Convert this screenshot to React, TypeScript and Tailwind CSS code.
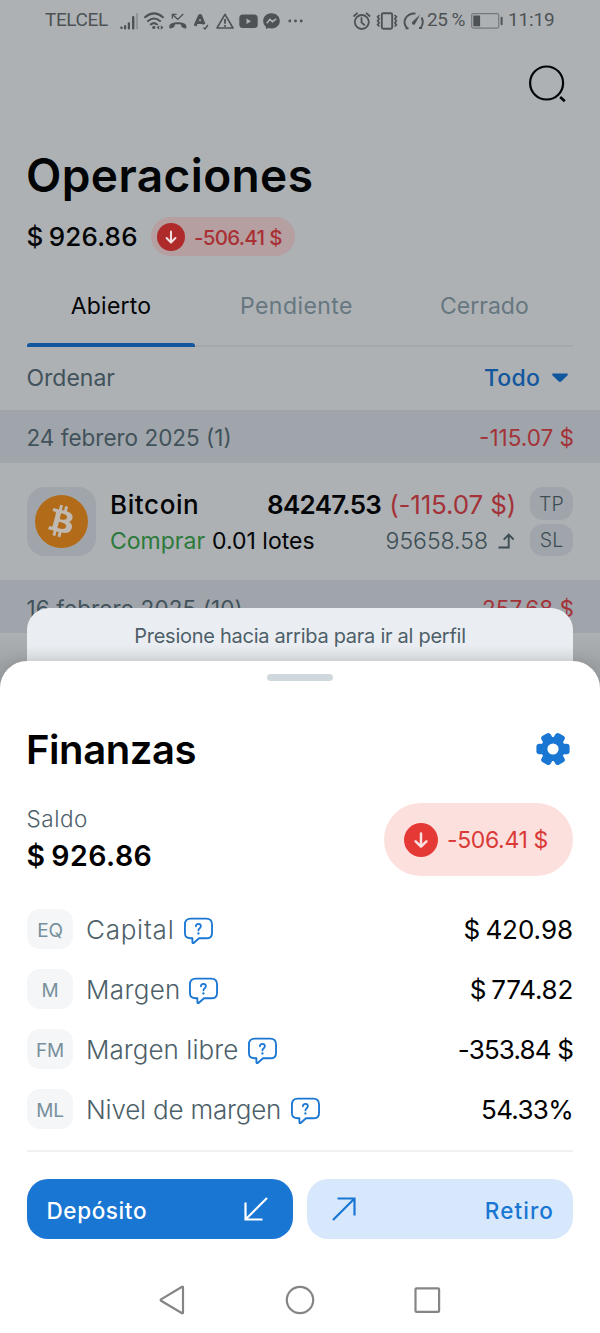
import React from "react";
import { FaBitcoin } from "react-icons/fa";

type Metric = {
  code: string;
  label: string;
  labelClass: string;
  value: string;
  valueClass: string;
};

const metrics: Metric[] = [
  {
    code: "EQ",
    label: "Capital",
    labelClass: "w-[97px] tracking-[0.75px]",
    value: "$ 420.98",
    valueClass: "tracking-[-0.05px] [word-spacing:-2px]",
  },
  {
    code: "M",
    label: "Margen",
    labelClass: "w-[102px] tracking-[0.35px]",
    value: "$ 774.82",
    valueClass: "tracking-[-0.25px] [word-spacing:-2px]",
  },
  {
    code: "FM",
    label: "Margen libre",
    labelClass: "w-[161px] tracking-[0.05px]",
    value: "-353.84 $",
    valueClass: "tracking-[-0.85px]",
  },
  {
    code: "ML",
    label: "Nivel de margen",
    labelClass: "w-[204px] tracking-[-0.2px]",
    value: "54.33%",
    valueClass: "tracking-[-0.7px]",
  },
];

const StatusBar = () => (
  <div className="flex h-[40px] items-center pt-px pl-[45px] font-['Roboto',sans-serif] text-[19px] text-[#4e5254]">
    <span className="w-[75px] tracking-[-0.4px]">TELCEL</span>
    <svg className="h-5 w-[18px]" viewBox="0 0 18 20" fill="#4e5254">
      <circle cx="1.5" cy="16.7" r="1.3" />
      <rect x="4" y="14" width="2.2" height="4.4" rx="1" />
      <rect x="7.8" y="11.2" width="2.2" height="7.2" rx="1" />
      <rect x="12" y="5" width="2.4" height="13.4" rx="1" />
      <rect x="15.8" y="2" width="2.2" height="16.4" rx="1" fill="#909496" />
    </svg>
    <svg
      className="ml-[6px] h-5 w-5"
      viewBox="0 0 20 20"
      fill="none"
      stroke="#4e5254"
      strokeWidth="2"
      strokeLinecap="round"
    >
      <path d="M1 6.2Q10 -1.4 19 6.2M4 10Q10 5 16 10M6.8 13.4Q10 10.8 13 13.4" />
      <circle cx="9.8" cy="16.4" r="1.6" fill="#4e5254" stroke="none" />
      <path
        d="M15.2 14.2v4.6l-2.4-2.3zM16.8 14.2v4.6l2.6-2.3z"
        fill="#4e5254"
        stroke="none"
      />
    </svg>
    <svg
      className="ml-[5px] h-5 w-[18px]"
      viewBox="0 0 18 20"
      fill="none"
      stroke="#4e5254"
      strokeWidth="1.4"
    >
      <path d="M3.4 7.6V3.4h4.2M3.8 3.8l5 4.6 5.4-5.4" />
      <path
        d="M.3 15.4c0-5.4 17.1-5.4 17.1 0 0 1.3-.4 2.4-1.4 2l-3-1.1c-.9-.4-.6-1.6-.8-2.5-2-.6-4.6-.6-6.6 0-.2.9.1 2.1-.8 2.5l-3 1.1c-1.1.4-1.5-.7-1.5-2z"
        fill="#4e5254"
        stroke="none"
      />
    </svg>
    <svg
      className="ml-[7px] h-5 w-[15px]"
      viewBox="0 0 15 20"
      fill="none"
      stroke="#4e5254"
      strokeWidth="3"
    >
      <path d="M1 15L5.2 5.3Q6 3.8 6.9 5.3L10 13.2M2.8 11.6h6.200" />
      <path d="M9.500 16.600l1.600 1.300 2.800-3.900" strokeWidth="1.400" />
    </svg>
    <svg
      className="ml-[7px] h-5 w-[18px]"
      viewBox="0 0 18 20"
      fill="none"
      stroke="#4e5254"
      strokeWidth="1.6"
      strokeLinejoin="round"
    >
      <path d="M9 3.3L17 17H1z" />
      <path d="M9 8v4.8M9 14.1v1.7" strokeWidth="1.8" />
    </svg>
    <svg className="ml-[5px] h-5 w-[19px]" viewBox="0 0 19 20">
      <rect x="0.3" y="3.6" width="18.4" height="13.4" rx="3.5" fill="#4e5254" />
      <path d="M7.5 7.5v5.6l4.6-2.8z" fill="#adb1b4" />
    </svg>
    <svg className="ml-[5px] h-5 w-[17px]" viewBox="0 0 17 20">
      <path
        d="M8.5 2.200c-4.700 0-8.300 3.300-8.300 7.700 0 2.300 1 4.200 2.600 5.600l.2 2.600 2.500-1.100c1 .3 1.900.4 3 .4 4.700 0 8.300-3.200 8.300-7.500s-3.600-7.700-8.300-7.700z"
        fill="#4e5254"
      />
      <path
        d="M3.8 12.3l3.1-4 2.7 2.4 3.6-2.8"
        fill="none"
        stroke="#adb1b4"
        strokeWidth="1.6"
      />
    </svg>
    <svg className="ml-[8px] h-5 w-4" viewBox="0 0 16 20" fill="#4e5254">
      <circle cx="1.8" cy="10" r="1.4" />
      <circle cx="7.5" cy="10" r="1.4" />
      <circle cx="13.2" cy="10" r="1.4" />
    </svg>

    <svg
      className="ml-[49px] h-5 w-[18px]"
      viewBox="0 0 18 20"
      fill="none"
      stroke="#4e5254"
      strokeWidth="1.8"
      strokeLinecap="round"
    >
      <circle cx="8.8" cy="11" r="7" />
      <path d="M8.5 7v4.3l2.8 2.6M1 5l3-2.7M16.6 5l-3-2.7" />
    </svg>
    <svg
      className="ml-[5px] h-5 w-[22px]"
      viewBox="0 0 22 20"
      fill="none"
      stroke="#4e5254"
      strokeWidth="1.9"
    >
      <rect x="5.8" y="2.2" width="10.4" height="15.6" rx="1.5" />
      <path
        d="M3.4 4l-1.800 1.800 1.500 1.900-1.500 2 1.500 2-1.500 2 1.800 1.800M18.600 4l1.800 1.800-1.500 1.900 1.500 2-1.500 2 1.500 2-1.800 1.800"
        strokeWidth="1.7"
      />
    </svg>
    <svg
      className="ml-[5px] h-5 w-[22px]"
      viewBox="0 0 22 20"
      fill="none"
      stroke="#4e5254"
      strokeWidth="1.9"
    >
      <path d="M4.300 17.300C-1.500 11.500 2.500 2 12.500 2.500M18.500 6.500c1.800 3.300 1.700 7-.8 10.200M2.500 17.200h3M16 17h3.200" />
      <path
        d="M17.200 3.500L9.400 10.800c-1.500 1.800.8 4 2.500 2.400z"
        fill="#4e5254"
        stroke="none"
      />
    </svg>
    <span className="ml-[2px] w-[44px] whitespace-nowrap tracking-[-0.5px]">
      25 %
    </span>
    <svg className="h-5 w-8" viewBox="0 0 32 20" fill="none">
      <rect x="0.7" y="2.7" width="27" height="14.4" rx="1.5" stroke="#75797b" strokeWidth="1.2" />
      <rect x="2.3" y="4.5" width="6.8" height="10.8" fill="#4e5254" />
      <rect x="29.6" y="5.7" width="2" height="8.6" rx="1" fill="#4e5254" />
    </svg>
    <span className="ml-[5px] tracking-[-0.16px]">11:19</span>
  </div>
);

const DownCircle = ({ className }: { className: string }) => (
  <svg className={className} viewBox="0 0 34 34" fill="none">
    <circle cx="17" cy="17" r="17" fill="currentColor" />
    <path
      d="M17 10.5v13M11.6 18.3l5.4 5.4 5.4-5.4"
      stroke="#fff"
      strokeOpacity="0.85"
      strokeWidth="2.5"
      strokeLinecap="round"
      strokeLinejoin="round"
    />
  </svg>
);

const HelpBubble = () => (
  <svg className="mt-[3px] ml-px h-[28px] w-[29px]" viewBox="0 0 30 28" fill="none">
    <path
      d="M7 1.2h16c4 0 6 2 6 5.8v9.2c0 3.800-2 5.300-6 5.300h-7.500l-5.200 4.600c-1 .9-1.600.5-1.600-.5v-4.100H7c-4 0-6-1.500-6-5.300V7c0-3.800 2-5.800 6-5.800z"
      stroke="#1976d2"
      strokeWidth="1.900"
      strokeLinejoin="round"
    />
    <path
      d="M12.300 9.200c0-3.500 5.200-3.300 5.200 0 0 1.900-2.600 2.100-2.600 4.200"
      stroke="#1976d2"
      strokeWidth="1.8"
      strokeLinecap="round"
    />
    <circle cx="14.900" cy="16.600" r="1.200" fill="#1976d2" />
  </svg>
);

const GearIcon = () => (
  <svg className="h-[34px] w-[34px]" viewBox="-17 -17 34 34" fill="#1976d2">
    <circle r="12" />
    <rect x="-16.6" y="-5.3" width="33.2" height="10.6" rx="3" />
    <rect x="-16.6" y="-5.3" width="33.2" height="10.6" rx="3" transform="rotate(60)" />
    <rect x="-16.6" y="-5.3" width="33.2" height="10.6" rx="3" transform="rotate(120)" />
    <circle r="5.6" fill="#fff" />
  </svg>
);

const Operations = () => (
  <div className="h-[700px] overflow-hidden bg-[#adb1b4]">
    <StatusBar />

    <div className="flex h-[97px] items-start justify-end pt-[25px] pr-[32px]">
      <svg
        className="h-10 w-10"
        viewBox="0 0 40 40"
        fill="none"
        stroke="#020406"
        strokeWidth="2.2"
      >
        <circle cx="18.6" cy="18" r="16.5" />
        <path d="M32.2 32l4.6 4.2" strokeWidth="2.6" />
      </svg>
    </div>

    <h1 className="ml-[26px] h-[78px] text-[46px] leading-[77px] font-semibold tracking-[0.4px] text-[#020406]">
      Operaciones
    </h1>

    <div className="mt-[2px] flex h-[39px] items-center">
      <span className="ml-[26.5px] w-[124.5px] text-[26px] font-medium tracking-[0.2px] whitespace-nowrap text-[#020406] [word-spacing:-2px]">
        $ 926.86
      </span>
      <div className="flex h-[39px] w-[144px] items-center rounded-full bg-[#b59fa1] pl-[6px]">
        <DownCircle className="h-[28px] w-[28px] text-[#ae2a2b]" />
        <span className="ml-[9px] pt-[3px] text-[20.5px] font-medium tracking-[-0.7px] whitespace-nowrap text-[#a93034]">
          -506.41 $
        </span>
      </div>
    </div>

    <div className="mx-[27px] mt-[7px] flex h-[84px] border-b-2 border-[#a4a8ab] text-[23px] leading-[86px] text-[#667780]">
      <div className="relative w-[168px] text-center tracking-[0.2px] text-[#020406]">
        Abierto
        <div className="absolute inset-x-0 -bottom-[2px] h-[4px] rounded-t-[3px] bg-[#12579d]" />
      </div>
      <div className="flex-1 pl-[45px] tracking-[0.44px]">Pendiente</div>
      <div className="w-[133px]">Cerrado</div>
    </div>

    <div className="flex h-[63px] items-center justify-between pr-[32px] pl-[26.5px] text-[23px]">
      <span className="text-[#41525a]">Ordenar</span>
      <div className="flex items-center gap-[12px] font-medium tracking-[0.22px] text-[#12579d]">
        Todo
        <svg className="mb-[2px] h-[10px] w-4" viewBox="0 0 16 10" fill="#12579d">
          <path d="M1.3 0.5h13.4c1.2 0 1.5 1.2.7 1.9L9.5 8.2c-1 .9-2 .9-3 0L.6 2.4C-.2 1.7.1.5 1.3.5z" />
        </svg>
      </div>
    </div>

    <div className="flex h-[53px] items-center justify-between bg-[#a0a5ab] pt-[2px] pr-[26px] pl-[26.5px] text-[22.5px]">
      <span className="text-[#41525a]">24 febrero 2025 (1)</span>
      <span className="text-[#a33338]">-115.07 $</span>
    </div>

    <div className="flex h-[117px] pt-[24px] pr-[27px] pl-[27px]">
      <div className="flex h-[69px] w-[69px] items-center justify-center rounded-[18px] bg-[#a0a5ab]">
        <div className="flex h-[53px] w-[53px] items-center justify-center rounded-full bg-[radial-gradient(circle,#bfb9b2_60%,#b26c19_61%)]">
          <FaBitcoin className="h-[53px] w-[53px] text-[#b26c19]" />
        </div>
      </div>
      <div className="ml-[14px] flex-1">
        <div className="flex h-[35px] items-center text-[26px] whitespace-nowrap">
          <span className="flex-1 font-medium tracking-[0.6px] text-[#020406]">
            Bitcoin
          </span>
          <span className="font-semibold tracking-[-0.7px] text-[#020406]">
            84247.53
          </span>
          <span className="ml-[8px] tracking-[-0.16px] text-[#a33338]">
            (-115.07 $)
          </span>
        </div>
        <div className="flex h-[38px] items-center text-[23px] whitespace-nowrap">
          <span className="text-[#2c7a3b]">Comprar</span>
          <span className="ml-[7px] flex-1 text-[#020406]">0.01 lotes</span>
          <span className="font-light text-[#3c4d54]">95658.58</span>
          <svg
            className="mr-[2px] ml-[10px] h-4 w-4"
            viewBox="0 0 16 16"
            fill="none"
            stroke="#3c4d54"
            strokeWidth="1.9"
          >
            <path d="M0.5 14.5h10.200V1.800M5.700 6.600l5-5 5 5" />
          </svg>
        </div>
      </div>
      <div className="ml-[14px] flex w-[43px] flex-col gap-[4px] text-[19.5px] font-light tracking-[0.2px] text-[#3c4d54]">
        <div className="flex h-[32.5px] items-center justify-center rounded-[13px] bg-[#a0a5ab] pt-[2px]">
          TP
        </div>
        <div className="flex h-[32.5px] items-center justify-center rounded-[13px] bg-[#a0a5ab] pt-[2px]">
          SL
        </div>
      </div>
    </div>

    <div className="flex h-[53px] items-center justify-between bg-[#a0a5ab] pt-[4px] pr-[26px] pl-[26.5px] text-[22.5px]">
      <span className="tracking-[0.09px] text-[#41525a]">
        16 febrero 2025 (10)
      </span>
      <span className="pt-px text-[#a33338]">-257.68 $</span>
    </div>
    <div className="h-[67px] bg-linear-to-b from-[#adb1b4] to-[#9fa2a5] to-50%" />
  </div>
);

const NavBar = () => (
  <div className="mt-[45px] flex h-8 items-center pl-[158px]">
    <svg className="h-8 w-7" viewBox="0 0 28 32" fill="none" stroke="#858585" strokeWidth="2.2">
      <path
        d="M25 3.2v25.6c0 .6-.5.7-.9.4L3 16.7c-.5-.4-.5-.9 0-1.300L24.100 2.800c.4-.3.900-.2.900.4z"
        strokeLinejoin="round"
      />
    </svg>
    <svg className="ml-[98px] h-8 w-8" viewBox="0 0 32 32" fill="none" stroke="#858585" strokeWidth="2.2">
      <circle cx="16" cy="16" r="13.2" />
    </svg>
    <svg className="ml-[95px] h-8 w-8" viewBox="0 0 32 32" fill="none" stroke="#858585" strokeWidth="2.2">
      <rect x="4.5" y="4.3" width="23.6" height="23.6" rx="1.2" />
    </svg>
  </div>
);

export default function App() {
  return (
    <div className="relative h-[1333px] w-[600px] overflow-hidden bg-white font-['Inter',sans-serif]">
      <Operations />

      <div className="absolute top-[607.5px] left-[27px] h-[80px] w-[546px] rounded-t-[22px] bg-linear-to-b from-[#eaeef2] from-45% to-[#d8dcdf] to-70% pt-[14px] text-center text-[20px] leading-[28px] tracking-[-0.27px] text-[#4d5f69]">
        Presione hacia arriba para ir al perfil
      </div>

      <div className="absolute top-[661px] left-0 h-[672px] w-full rounded-t-[27px] bg-white shadow-[0_0_14px_rgba(0,0,0,0.12)]">
        <div className="mx-auto mt-[13px] h-[7px] w-[66px] rounded-full bg-[#cfd8dc]" />

        <div className="mt-[38px] flex h-[60px] items-center justify-between pr-[30px] pl-[26px]">
          <h2 className="pt-[2px] text-[40px] font-semibold tracking-[-0.43px] text-black">
            Finanzas
          </h2>
          <GearIcon />
        </div>

        <div className="mt-[24px] flex h-[73px] justify-between pr-[27px] pl-[26.5px]">
          <div className="whitespace-nowrap">
            <div className="h-[34px] text-[22.5px] leading-[32px] font-light tracking-[0.55px] text-[#4d5f69]">
              Saldo
            </div>
            <div className="h-[38px] text-[28.5px] leading-[37px] font-semibold tracking-[0.5px] text-black [word-spacing:-2px]">
              $ 926.86
            </div>
          </div>
          <div className="flex w-[189px] items-center rounded-full bg-[#fce0de] pl-[19.5px]">
            <DownCircle className="h-[34px] w-[34px] text-[#e53935]" />
            <span className="ml-[9.5px] pt-[2px] text-[23px] tracking-[-0.36px] whitespace-nowrap text-[#da3a37]">
              -506.41 $
            </span>
          </div>
        </div>

        <div className="mx-[27px] mt-[33px] flex flex-col gap-[20px] border-b-2 border-[#eff1f3] pb-[21px]">
          {metrics.map((m) => (
            <div key={m.code} className="flex h-[40px] items-center">
              <div className="flex h-[40px] w-[46px] items-center justify-center rounded-[13px] bg-[#f4f6f8] pt-[4px] text-[19px] tracking-[-0.3px] text-[#78909c]">
                {m.code}
              </div>
              <span
                className={`ml-[13px] text-[26px] font-light whitespace-nowrap text-[#4d5f69] ${m.labelClass}`}
              >
                {m.label}
              </span>
              <HelpBubble />
              <span
                className={`ml-auto text-[26px] text-black ${m.valueClass}`}
              >
                {m.value}
              </span>
            </div>
          ))}
        </div>

        <div className="mx-[27px] mt-[27px] grid grid-cols-2 gap-[14px] text-[22.5px] font-medium">
          <button className="flex h-[60px] items-center justify-between rounded-[21px] bg-[#1976d2] pr-[25px] pl-[19.5px] tracking-[0.6px] text-white">
            <span className="pt-[4px]">Depósito</span>
            <svg className="h-6 w-6" viewBox="0 0 24 24" fill="none" stroke="currentColor" strokeWidth="2.2">
              <path d="M23 1L1.5 22.5M1.5 5.5v17h17" />
            </svg>
          </button>
          <button className="flex h-[60px] items-center justify-between rounded-[21px] bg-[#d7e8fd] pr-[19px] pl-[25px] tracking-[1.08px] text-[#1976d2]">
            <svg className="h-6 w-6" viewBox="0 0 24 24" fill="none" stroke="currentColor" strokeWidth="2.2">
              <path d="M1 23L22.5 1.5M5.500 1.500h17v17" />
            </svg>
            <span className="pt-[4px]">Retiro</span>
          </button>
        </div>

        <NavBar />
      </div>
    </div>
  );
}
